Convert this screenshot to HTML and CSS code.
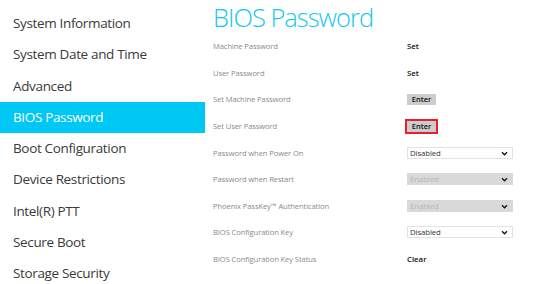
FILE: index.html
```html
<!DOCTYPE html>
<html>
<head>
<meta charset="utf-8">
<link rel="stylesheet" href="styles.css">
</head>
<body>
<div class="app">
  <nav class="nav">
    <div class="nav-item">System Information</div>
    <div class="nav-item">System Date and Time</div>
    <div class="nav-item">Advanced</div>
    <div class="nav-item active">BIOS Password</div>
    <div class="nav-item">Boot Configuration</div>
    <div class="nav-item">Device Restrictions</div>
    <div class="nav-item">Intel(R) PTT</div>
    <div class="nav-item">Secure Boot</div>
    <div class="nav-item">Storage Security</div>
  </nav>
  <main class="content">
    <h1 class="title">BIOS Password</h1>
    <div class="rows">
      <div class="row"><span class="label">Machine Password</span><span class="value">Set</span></div>
      <div class="row"><span class="label">User Password</span><span class="value">Set</span></div>
      <div class="row"><span class="label">Set Machine Password</span><span class="btn-wrap"><span class="btn">Enter</span></span></div>
      <div class="row"><span class="label">Set User Password</span><span class="btn-wrap focused"><span class="btn">Enter</span></span></div>
      <div class="row"><span class="label">Password when Power On</span><span class="select">Disabled<svg class="chev" viewBox="0 0 8 6"><path d="M1 1.5 L4 4.5 L7 1.5" fill="none" stroke="#111" stroke-width="1.6"/></svg></span></div>
      <div class="row"><span class="label">Password when Restart</span><span class="select disabled">Enabled<svg class="chev" viewBox="0 0 8 6"><path d="M1 1.5 L4 4.5 L7 1.5" fill="none" stroke="#111" stroke-width="1.6"/></svg></span></div>
      <div class="row"><span class="label">Phoenix PassKey™ Authentication</span><span class="select disabled">Enabled<svg class="chev" viewBox="0 0 8 6"><path d="M1 1.5 L4 4.5 L7 1.5" fill="none" stroke="#111" stroke-width="1.6"/></svg></span></div>
      <div class="row"><span class="label">BIOS Configuration Key</span><span class="select">Disabled<svg class="chev" viewBox="0 0 8 6"><path d="M1 1.5 L4 4.5 L7 1.5" fill="none" stroke="#111" stroke-width="1.6"/></svg></span></div>
      <div class="row"><span class="label">BIOS Configuration Key Status</span><span class="value">Clear</span></div>
    </div>
  </main>
</div>
</body>
</html>
```
FILE: styles.css
```css
html, body {
  margin: 0;
  padding: 0;
  background: #ffffff;
}
body {
  font-family: "Open Sans", "Noto Sans", sans-serif;
  width: 550px;
  height: 284px;
  overflow: hidden;
}
.app {
  display: flex;
}
.nav {
  width: 205px;
  padding-top: 8px;
  flex: none;
}
.nav-item {
  height: 31.3px;
  line-height: 31px;
  padding-left: 13px;
  font-size: 13.5px;
  letter-spacing: -0.35px;
  color: #3a3a3a;
  white-space: nowrap;
}
.nav-item.active {
  background: #00c8f5;
  color: #ffffff;
}
.content {
  padding-left: 8px;
  flex: 1;
}
.title {
  margin: 0;
  padding-top: 2px;
  height: 31px;
  line-height: 30px;
  font-size: 25.5px;
  letter-spacing: -1px;
  font-weight: 300;
  color: #14c8ec;
}
.rows {
  display: flex;
  flex-direction: column;
}
.row {
  height: 26.6px;
  display: grid;
  grid-template-columns: 194px 106px;
  align-items: center;
}
.label {
  font-size: 7.6px;
  letter-spacing: -0.1px;
  color: #8a8a8a;
  white-space: nowrap;
}
.value {
  font-size: 7.8px;
  font-weight: 600;
  color: #111111;
}
.btn-wrap {
  justify-self: start;
  border: 2px solid transparent;
  margin-left: -2px;
  display: flex;
}
.btn-wrap.focused {
  border-color: #e8202a;
}
.btn {
  display: block;
  width: 29px;
  height: 11px;
  line-height: 11px;
  background: #cccccc;
  text-align: center;
  font-size: 7.5px;
  font-weight: 600;
  color: #111111;
}
.select {
  position: relative;
  box-sizing: border-box;
  width: 106px;
  height: 12px;
  line-height: 10px;
  border: 1px solid #e2e2e2;
  padding-left: 2px;
  font-size: 7.8px;
  letter-spacing: -0.1px;
  color: #333333;
  background: #ffffff;
}
.select.disabled {
  background: #d9d9d9;
  border-color: #d9d9d9;
  color: #b8b8b8;
}
.chev {
  position: absolute;
  right: 4px;
  top: 3px;
  width: 7px;
  height: 5px;
}
```
